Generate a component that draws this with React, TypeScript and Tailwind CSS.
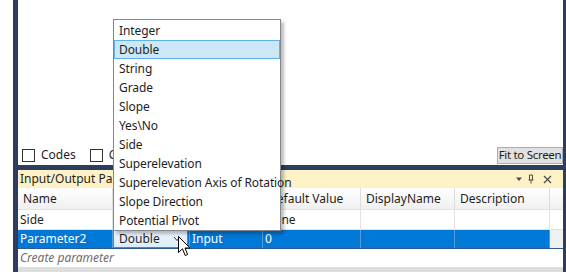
import React from "react";

const items = [
  "Integer",
  "Double",
  "String",
  "Grade",
  "Slope",
  "Yes\\No",
  "Side",
  "Superelevation",
  "Superelevation Axis of Rotation",
  "Slope Direction",
  "Potential Pivot",
];

const cols = [95, 77, 73, 98, 94, 95];

function Checkbox() {
  return <span className="inline-block w-[13px] h-[13px] border border-[#333333] bg-white" />;
}

export default function App() {
  return (
    <div
      className="w-[566px] h-[272px] flex overflow-hidden bg-white relative text-[12px] text-[#1e1e1e]"
      style={{ fontFamily: '"Noto Sans", "Open Sans", sans-serif' }}
    >
      <div className="w-[13px] bg-white" />
      <div className="w-[5px] bg-[#2c3d5d]" />
      <div className="w-[545px] flex flex-col">
        {/* top canvas */}
        <div className="h-[165px] bg-white flex flex-col justify-end">
          <div className="flex items-center h-[19px] pb-[1px]">
            <div className="flex items-center ml-[4px] gap-[6px]">
              <Checkbox />
              <span className="leading-none">Codes</span>
            </div>
            <div className="flex items-center ml-[14px] gap-[6px]">
              <Checkbox />
              <span className="leading-none">Comments</span>
            </div>
            <div className="ml-auto h-[17px] w-[66px] border border-[#adadad] bg-[#e1e1e1] flex items-center justify-center leading-none whitespace-nowrap text-[11.5px] tracking-[-0.3px]">
              Fit to Screen
            </div>
          </div>
        </div>
        {/* splitter */}
        <div className="h-[5px] bg-[#2c3d5d]" />
        {/* title bar */}
        <div className="h-[18px] bg-[#fdf1c6] flex items-center px-[2px]">
          <span className="leading-none">Input/Output Parameters</span>
          <div className="ml-auto flex items-center pr-[9px] text-[#4a4a4a]">
            <svg width="8" height="8" viewBox="0 0 8 8">
              <path d="M1 2.5 L7 2.5 L4 6 Z" fill="#4a4a4a" />
            </svg>
            <svg width="8" height="10" viewBox="0 0 8 10" className="ml-[4px]">
              <path d="M2.5 1 V6 M5.5 1 V6 M1.5 6 H6.5 M4 6 V9.5 M2.5 1 H5.5" stroke="#4a4a4a" strokeWidth="1" fill="none" />
            </svg>
            <svg width="9" height="9" viewBox="0 0 9 9" className="ml-[8px]">
              <path d="M1 1 L8 8 M8 1 L1 8" stroke="#4a4a4a" strokeWidth="1.2" />
            </svg>
          </div>
        </div>
        {/* header row */}
        <div className="h-[22px] flex bg-gradient-to-b from-[#ffffff] to-[#f0f0f0] border-b border-[#e3e3e3]">
          {["Name", "", "", "Default Value", "DisplayName", "Description"].map((h, i) => (
            <div
              key={i}
              className="border-r border-[#dddddd] flex items-center pl-[5px]"
              style={{ width: cols[i] }}
            >
              {h}
            </div>
          ))}
          <div className="flex-1" />
        </div>
        {/* row 1 */}
        <div className="h-[20px] flex bg-white border-b border-[#e3e3e3]">
          {["Side", "", "", "None", "", ""].map((h, i) => (
            <div
              key={i}
              className="border-r border-[#e3e3e3] flex items-center pl-[2px]"
              style={{ width: cols[i] }}
            >
              {h}
            </div>
          ))}
          <div className="flex-1" />
        </div>
        {/* selected row */}
        <div className="h-[19px] flex border-b border-[#2b5c8c]">
          <div className="bg-[#0078d7] text-white flex items-center pl-[2px] border-r border-[#5a9ad6]" style={{ width: cols[0] }}>
            Parameter2
          </div>
          <div className="bg-[#0078d7] border-r border-[#5a9ad6] p-0" style={{ width: cols[1] }}>
            <div className="h-full w-[75px] border border-[#4a88c4] bg-gradient-to-b from-[#eef5fc] to-[#dcecfc] flex items-center pl-[5px] text-[#1e1e1e]">
              Double
              <svg width="8" height="6" viewBox="0 0 8 6" className="ml-auto mr-[6px]">
                <path d="M1 1 L4 4.5 L7 1" stroke="#333" strokeWidth="1" fill="none" />
              </svg>
            </div>
          </div>
          <div className="bg-[#0078d7] text-white flex items-center pl-[2px] border-r border-[#5a9ad6]" style={{ width: cols[2] }}>
            Input
          </div>
          <div className="bg-[#0078d7] text-white flex items-center pl-[2px] border-r border-[#5a9ad6]" style={{ width: cols[3] }}>
            0
          </div>
          <div className="bg-[#0078d7] border-r border-[#5a9ad6]" style={{ width: cols[4] }} />
          <div className="bg-[#0078d7] border-r border-[#5a9ad6]" style={{ width: cols[5] }} />
          <div className="flex-1 bg-[#f0f0f0]" />
        </div>
        {/* create row */}
        <div className="h-[18px] flex items-center pl-[2px] italic text-[#6d6d6d] bg-white">
          Create parameter
        </div>
        <div className="flex-1 bg-[#dedede]" />
      </div>
      <div className="w-[3px] bg-[#2c3d5d]" />

      {/* dropdown popup */}
      <div className="absolute left-[113px] top-[19px] w-[168px] border border-[#828790] bg-white pt-[1px] shadow-[3px_3px_3px_rgba(0,0,0,0.25)] tracking-[-0.1px]">
        {items.map((it, i) => (
          <div
            key={it}
            className={
              "h-[19px] flex items-center whitespace-nowrap " +
              (i === 1 ? "bg-[#cce8f7] border border-[#5fb2e6] pl-[4px]" : "pl-[5px]")
            }
          >
            {it}
          </div>
        ))}
      </div>

      {/* mouse cursor */}
      <svg className="absolute left-[178px] top-[236px]" width="13" height="22" viewBox="0 0 13 22">
        <path
          d="M0.5 0.5 L0.5 16.5 L4.5 12.8 L7.2 19.5 L9.6 18.5 L7 12 L12 12 Z"
          fill="#ffffff"
          stroke="#000000"
          strokeWidth="1"
          strokeLinejoin="miter"
        />
      </svg>
    </div>
  );
}
